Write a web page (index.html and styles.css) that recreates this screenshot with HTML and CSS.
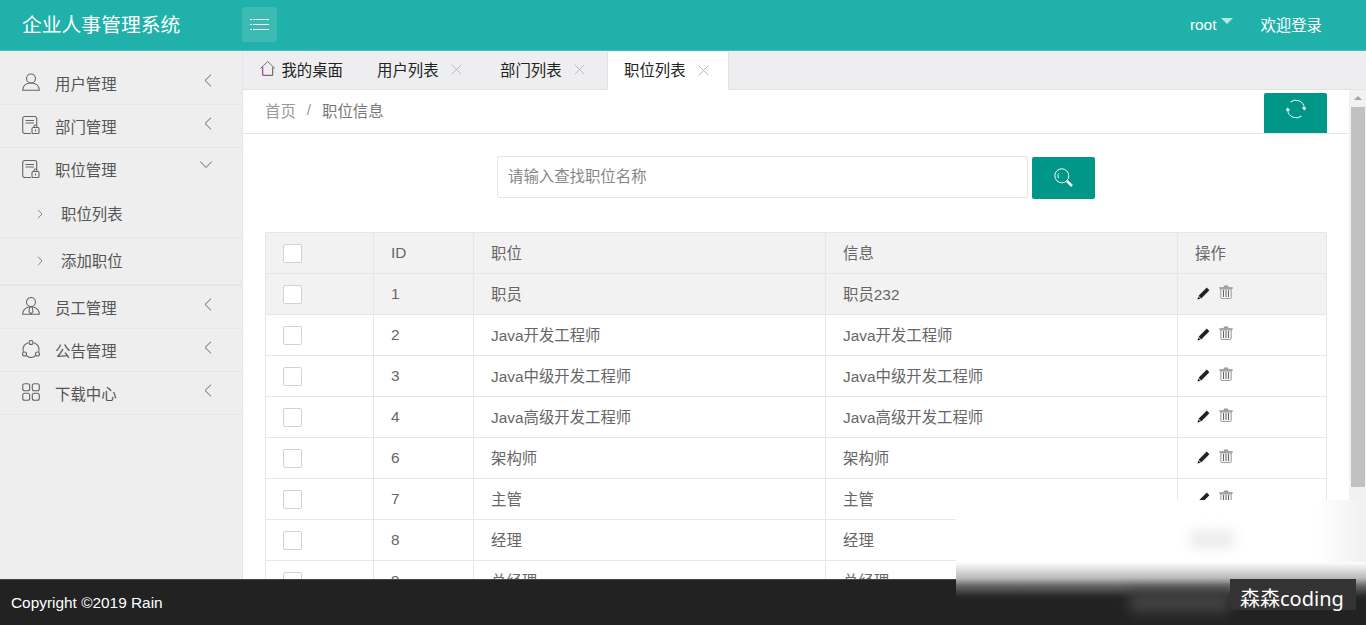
FILE: index.html
```html
<!DOCTYPE html>
<html lang="zh-CN">
<head>
    <meta charset="UTF-8">
    <title>企业人事管理系统</title>
    <link rel="stylesheet" href="styles.css">
</head>
<body>
    <svg class="sprites" width="0" height="0">
        <symbol id="i-user" viewBox="0 0 18 18"><circle cx="9" cy="5.500" r="4.500"/><path d="M.7 17.300c0-4.600 3.400-7.300 8.300-7.300s8.300 2.700 8.300 7.300z"/></symbol>
        <symbol id="i-doc" viewBox="0 0 18 18"><path d="M9 17.500H3C1.600 17.500 .7 16.600 .7 15.200V2.500C.7 1.200 1.600.5 3 .5h9.500c1.300 0 2.200.7 2.200 2V9"/><path d="M3.500 4.500h8.500M3.500 7h8.500"/><rect x="10" y="11.500" width="7" height="6" rx="1"/><path d="M12 11.500v-1c0-2 3-2 3 0v1M13.500 13.500v2"/></symbol>
        <symbol id="i-staff" viewBox="0 0 18 18"><circle cx="9" cy="5" r="4.500"/><path d="M.7 17.300c0-4 2.800-6.300 5.800-7.300h5c3 1 5.800 3.300 5.800 7.300z"/><path d="M7.800 10l-.8 4.500 2 2.500 2-2.500-.8-4.500"/></symbol>
        <symbol id="i-notice" viewBox="0 0 18 18"><circle cx="9" cy="2.500" r="2"/><circle cx="2.500" cy="14" r="2"/><circle cx="15.500" cy="14" r="2"/><path d="M6.200 2.800C3 4 1 6.700 1 9.500c0 .8.100 1.500.4 2.300M11.800 2.800C15 4 17 6.700 17 9.500c0 .8-.1 1.500-.4 2.300M4.500 15.800c2.700 2 6.300 2 9 0"/></symbol>
        <symbol id="i-grid" viewBox="0 0 18 18"><rect x=".7" y=".7" width="7" height="7" rx="2"/><rect x="10.300" y=".7" width="7" height="7" rx="2"/><rect x=".7" y="10.300" width="7" height="7" rx="2"/><rect x="10.300" y="10.300" width="7" height="7" rx="2"/></symbol>
        <symbol id="i-left" viewBox="0 0 8 13"><path d="M7 .7L1 6.500l6 5.800"/></symbol>
        <symbol id="i-right" viewBox="0 0 6 10"><path d="M1 .7L5 5 1 9.300"/></symbol>
        <symbol id="i-x" viewBox="0 0 11 11"><path d="M.7.7l9.600 9.600M10.300.7L.7 10.300"/></symbol>
        <symbol id="i-pen" viewBox="0 0 13 13"><path d="M9.800.6l2.600 2.600-8.200 8.200-2.600-2.600z" fill="#222"/><path d="M1.300 9.400l2.300 2.300-3.100.8z" fill="#222"/></symbol>
        <symbol id="i-trash" viewBox="0 0 14 14"><path d="M.3 2.300h13.400v1.400H.3z" fill="#8a8a8a"/><path d="M4.500 2.500L5 .6h4l.5 1.900z" fill="#999"/><path d="M1.800 4v8.600c0 .6.400 1 1 1h8.400c.6 0 1-.4 1-1V4z" fill="#f4f4f4" stroke="#999"/><path d="M4.500 5v7M7 5v7M9.500 5v7" stroke="#666"/></symbol>
    </svg>

    <header class="topbar">
        <div class="logo">企业人事管理系统</div>
        <a class="menu-btn">
            <svg width="19" height="11" viewBox="0 0 19 11"><path d="M0 .5h2M3 .5h16M0 5.500h2M3 5.500h16M0 10.500h2M3 10.500h16" stroke="#fff"/></svg>
        </a>
        <div class="topbar-right">
            <span class="user">root<i class="caret"></i></span>
            <span class="welcome">欢迎登录</span>
        </div>
    </header>

    <div class="middle">
        <aside class="sidebar">
            <div class="nav-item"><svg class="nav-icon"><use href="#i-user"/></svg><span>用户管理</span><svg class="nav-arrow"><use href="#i-left"/></svg></div>
            <div class="nav-item"><svg class="nav-icon"><use href="#i-doc"/></svg><span>部门管理</span><svg class="nav-arrow"><use href="#i-left"/></svg></div>
            <div class="nav-item nav-open"><svg class="nav-icon"><use href="#i-doc"/></svg><span>职位管理</span><svg class="nav-arrow arrow-down"><use href="#i-left"/></svg></div>
            <div class="sub-item"><svg class="sub-arrow"><use href="#i-right"/></svg><span>职位列表</span></div>
            <div class="sub-item sub-last"><svg class="sub-arrow"><use href="#i-right"/></svg><span>添加职位</span></div>
            <div class="nav-item"><svg class="nav-icon"><use href="#i-staff"/></svg><span>员工管理</span><svg class="nav-arrow"><use href="#i-left"/></svg></div>
            <div class="nav-item"><svg class="nav-icon"><use href="#i-notice"/></svg><span>公告管理</span><svg class="nav-arrow"><use href="#i-left"/></svg></div>
            <div class="nav-item"><svg class="nav-icon"><use href="#i-grid"/></svg><span>下载中心</span><svg class="nav-arrow"><use href="#i-left"/></svg></div>
        </aside>

        <main class="main">
            <div class="tabs">
                <div class="tab tab-home">
                    <svg width="17" height="17" viewBox="0 0 17 17"><path d="M.5 8.500L8.500.8l8 7.700" fill="none" stroke="#666"/><path d="M3 7v9" stroke="#800080" fill="none"/><path d="M3 16h11V7" stroke="#444" fill="none"/></svg>
                    <span>我的桌面</span>
                </div>
                <div class="tab"><span>用户列表</span><svg class="tab-close"><use href="#i-x"/></svg></div>
                <div class="tab"><span>部门列表</span><svg class="tab-close"><use href="#i-x"/></svg></div>
                <div class="tab tab-active"><span>职位列表</span><svg class="tab-close"><use href="#i-x"/></svg></div>
            </div>

            <div class="content-wrap">
                <div class="content">
                    <div class="crumb">
                        <span class="crumb-link">首页</span>
                        <span class="crumb-sep">/</span>
                        <span class="crumb-cur">职位信息</span>
                        <a class="btn btn-refresh">
                            <svg width="20" height="20" viewBox="0 0 20 20" fill="none" stroke="#fff"><path d="M4.500 3A8.500 8.500 0 0 1 18.300 9M15.500 17A8.500 8.500 0 0 1 1.700 11"/><path d="M15.800 8.500h5l-2.500 3zM4.200 11.500h-5l2.500-3z" fill="#fff" stroke="none"/></svg>
                        </a>
                    </div>

                    <form class="search">
                        <div class="search-input">请输入查找职位名称</div>
                        <a class="btn btn-search">
                            <svg width="19" height="19" viewBox="0 0 19 19" fill="none" stroke="#fff"><circle cx="7.800" cy="7.800" r="7"/><path d="M4.500 5.500c-.7 1.500-.7 3 0 4.500"/><path d="M13 13l5 5" stroke-width="2.500"/></svg>
                        </a>
                    </form>

                    <table class="grid">
                        <colgroup><col class="c-check"><col class="c-id"><col class="c-name"><col class="c-info"><col class="c-op"></colgroup>
                        <thead>
                            <tr><th><i class="check"></i></th><th>ID</th><th><span class="cjk">职位</span></th><th><span class="cjk">信息</span></th><th><span class="cjk">操作</span></th></tr>
                        </thead>
                        <tbody>
                            <tr class="row-hover"><td><i class="check"></i></td><td>1</td><td><span class="cjk">职员</span></td><td><span class="cjk">职员232</span></td><td class="ops"><svg class="pen"><use href="#i-pen"/></svg><svg class="trash"><use href="#i-trash"/></svg></td></tr>
                            <tr><td><i class="check"></i></td><td>2</td><td><span class="cjk">Java开发工程师</span></td><td><span class="cjk">Java开发工程师</span></td><td class="ops"><svg class="pen"><use href="#i-pen"/></svg><svg class="trash"><use href="#i-trash"/></svg></td></tr>
                            <tr><td><i class="check"></i></td><td>3</td><td><span class="cjk">Java中级开发工程师</span></td><td><span class="cjk">Java中级开发工程师</span></td><td class="ops"><svg class="pen"><use href="#i-pen"/></svg><svg class="trash"><use href="#i-trash"/></svg></td></tr>
                            <tr><td><i class="check"></i></td><td>4</td><td><span class="cjk">Java高级开发工程师</span></td><td><span class="cjk">Java高级开发工程师</span></td><td class="ops"><svg class="pen"><use href="#i-pen"/></svg><svg class="trash"><use href="#i-trash"/></svg></td></tr>
                            <tr><td><i class="check"></i></td><td>6</td><td><span class="cjk">架构师</span></td><td><span class="cjk">架构师</span></td><td class="ops"><svg class="pen"><use href="#i-pen"/></svg><svg class="trash"><use href="#i-trash"/></svg></td></tr>
                            <tr><td><i class="check"></i></td><td>7</td><td><span class="cjk">主管</span></td><td><span class="cjk">主管</span></td><td class="ops"><svg class="pen"><use href="#i-pen"/></svg><svg class="trash"><use href="#i-trash"/></svg></td></tr>
                            <tr><td><i class="check"></i></td><td>8</td><td><span class="cjk">经理</span></td><td><span class="cjk">经理</span></td><td class="ops"><svg class="pen"><use href="#i-pen"/></svg><svg class="trash"><use href="#i-trash"/></svg></td></tr>
                            <tr><td><i class="check"></i></td><td>9</td><td><span class="cjk">总经理</span></td><td><span class="cjk">总经理</span></td><td class="ops"><svg class="pen"><use href="#i-pen"/></svg><svg class="trash"><use href="#i-trash"/></svg></td></tr>
                        </tbody>
                    </table>
                </div>

                <div class="scrollbar">
                    <i class="scroll-up"></i>
                    <div class="scroll-thumb"></div>
                </div>
            </div>
        </main>
    </div>

    <footer class="footer">Copyright ©2019 Rain</footer>

    <!-- blurred watermark patch over the bottom right corner -->
    <div class="blur-patch"><i class="blur-smudge"></i></div>
    <i class="blur-dark"></i>
    <div class="watermark">森森coding</div>
</body>
</html>
```

FILE: styles.css
```css
* {
    box-sizing: border-box;
}

html, body {
    height: 100%;
}

body {
    margin: 0;
    display: flex;
    flex-direction: column;
    position: relative;
    overflow: hidden;
    font-family: "Liberation Sans", "Noto Sans CJK SC", sans-serif;
    font-size: 15.4px;
    color: #666;
    background-color: #fff;
}

.sprites {
    position: absolute;
}

/* top bar */
.topbar {
    flex: 0 0 51px;
    display: flex;
    align-items: center;
    padding-bottom: 1px;
    background-color: #20b2aa;
    border-bottom: 1px solid #3cc2ba;
    color: #fff;
}

.logo {
    width: 242px;
    padding-left: 22px;
    padding-bottom: 3px;
    font-size: 19.8px;
}

.menu-btn {
    width: 35px;
    height: 35px;
    display: flex;
    align-items: center;
    justify-content: center;
    background-color: rgba(255, 255, 255, 0.12);
    border-radius: 3px;
}

.topbar-right {
    margin-left: auto;
    display: flex;
    align-items: center;
    padding-right: 44px;
    padding-bottom: 2px;
}

.user {
    display: flex;
    align-items: center;
    margin-top: 2px;
    margin-right: 27px;
}

.caret {
    width: 0;
    height: 0;
    margin-left: 5px;
    margin-top: -7px;
    border-style: solid;
    border-width: 6px 6.5px 0;
    border-color: #b5e6e0 transparent transparent;
}

.middle {
    flex: 1;
    min-height: 0;
    display: flex;
}

/* side menu */
.sidebar {
    flex: 0 0 243px;
    padding-top: 11px;
    background-color: #eee;
    border-right: 1px solid #e6e6e6;
    color: #555;
}

.nav-item {
    height: 43px;
    display: flex;
    align-items: center;
    padding: 1px 0 0 22px;
    border-bottom: 1px solid #e6e6e6;
}

.nav-item span, .sub-item span {
    margin-bottom: 2px;
}

.nav-open {
    border-bottom: none;
}

.nav-icon {
    width: 18px;
    height: 18px;
    margin-right: 15px;
    margin-top: -3px;
    fill: none;
    stroke: #666;
    stroke-width: 1.1;
}

.nav-arrow {
    width: 8px;
    height: 13px;
    margin-left: 87px;
    margin-top: -7px;
    fill: none;
    stroke: #666;
}

.arrow-down {
    transform: translate(-2px, -2px) rotate(-90deg);
}

.sub-item {
    height: 47px;
    display: flex;
    align-items: center;
    padding-left: 37px;
    border-bottom: 1px solid #e6e6e6;
}

.sub-last {
    height: 48px;
    border-bottom: 2px solid #e6e6e6;
}

.sub-arrow {
    width: 6px;
    height: 10px;
    margin-right: 18px;
    fill: none;
    stroke: #888;
}

/* tabs */
.main {
    flex: 1;
    min-width: 0;
    display: flex;
    flex-direction: column;
}

.tabs {
    flex: 0 0 39px;
    min-height: 0;
    display: flex;
    background-color: #eeeef0;
    border-bottom: 1px solid #e2e2e2;
    color: #222;
}

.tab {
    flex: none;
    display: flex;
    align-items: center;
    width: 123px;
    height: 38px;
    padding: 0 17px;
    white-space: nowrap;
}

.tab span {
    margin-bottom: 3px;
}

.tab-home {
    width: 117px;
    gap: 6px;
}

.tab-home svg {
    margin-top: -3px;
}

.tab-close {
    width: 11px;
    height: 11px;
    margin-left: 12px;
    margin-bottom: 1px;
    fill: none;
    stroke: #bbb;
}

.tab-active {
    width: 122px;
    margin-left: 1px;
    margin-top: 1px;
    padding: 0 16px 1px;
    background-color: #fff;
    border-left: 1px solid #e2e2e2;
    border-right: 1px solid #e2e2e2;
}

/* page body */
.content-wrap {
    flex: 1;
    min-height: 0;
    display: flex;
}

.content {
    flex: 1;
    min-width: 0;
    overflow: hidden;
}

.crumb {
    height: 44px;
    display: flex;
    align-items: center;
    padding: 0 22px;
    border-bottom: 1px solid #e6e6e6;
}

.crumb span {
    margin-bottom: 4px;
}

.crumb-link {
    color: #999;
}

.crumb-sep {
    margin: 0 11px;
    color: #999;
}

.crumb-cur {
    color: #777;
}

.btn {
    display: flex;
    align-items: center;
    justify-content: center;
    width: 63px;
    background-color: #009688;
    border-radius: 2px;
}

.btn-refresh {
    margin-left: auto;
    align-self: flex-end;
    height: 40px;
    padding-bottom: 9px;
    border-radius: 2px 2px 0 0;
}

.search {
    display: flex;
    justify-content: center;
    gap: 4px;
    margin: 22px 0 33px;
}

.search-input {
    width: 531px;
    height: 42px;
    display: flex;
    align-items: center;
    padding: 0 0 4px 10px;
    background-color: #fff;
    border: 1px solid #e6e6e6;
    border-radius: 2px;
    color: #888;
}

.btn-search {
    height: 42px;
    margin-top: 1px;
    padding-bottom: 2px;
}

/* table */
.grid {
    width: 1062px;
    margin-left: 22px;
    border-collapse: collapse;
    table-layout: fixed;
}

.c-check { width: 108px; }
.c-id { width: 100px; }
.c-name { width: 352px; }
.c-info { width: 352px; }
.c-op { width: 149px; }

.grid th, .grid td {
    height: 41px;
    padding: 0 17px;
    border: 1px solid #e6e6e6;
    font-weight: normal;
    text-align: left;
    white-space: nowrap;
}

.grid th, .row-hover td {
    background-color: #f2f2f2;
}

.cjk {
    display: block;
    margin-bottom: 2px;
}

.check {
    display: block;
    width: 19px;
    height: 19px;
    background-color: #fff;
    border: 1px solid #d2d2d2;
    border-radius: 2px;
}

.ops {
    line-height: 0;
}

.pen {
    width: 13px;
    height: 13px;
    margin-left: 2px;
    margin-right: 9px;
    margin-bottom: 2px;
}

.trash {
    width: 14px;
    height: 14px;
    margin-top: -2px;
    vertical-align: top;
}

.scrollbar {
    flex: 0 0 17px;
    background-color: #f1f1f1;
}

.scroll-up {
    display: block;
    width: 0;
    height: 0;
    margin: 6px auto 0;
    border-style: solid;
    border-width: 0 4px 4px;
    border-color: transparent transparent #a3a3a3;
}

.scroll-thumb {
    height: 380px;
    margin: 7px 1px 0 2px;
    background-color: #c1c1c1;
}

.footer {
    flex: 0 0 46px;
    display: flex;
    align-items: center;
    padding-left: 11px;
    background-color: #222;
    border-top: 1px solid #444;
    color: #fff;
}

/* overlays */
.blur-patch {
    position: absolute;
    left: 956px;
    right: 0;
    top: 500px;
    height: 100px;
    background:
        linear-gradient(to right, rgba(240, 240, 240, 0) 88%, #f0f0f0 100%) no-repeat 0 0 / 100% 62%,
        linear-gradient(#fff 0, #fff 62%, #bbb 78%, #666 86%, #2a2a2a 96%, rgba(34, 34, 34, 0.9) 100%);
}

.blur-smudge {
    position: absolute;
    left: 234px;
    top: 30px;
    width: 44px;
    height: 18px;
    background-color: #ececec;
    filter: blur(6px);
}

.blur-dark {
    position: absolute;
    left: 1130px;
    top: 592px;
    width: 100px;
    height: 20px;
    background-color: #444;
    filter: blur(7px);
}

.watermark {
    position: absolute;
    left: 1230px;
    top: 579px;
    width: 126px;
    height: 31px;
    padding-left: 10px;
    background-color: #333;
    color: #fff;
    font-family: "Noto Sans", "Noto Sans CJK SC", sans-serif;
    font-size: 20px;
    line-height: 40px;
    white-space: nowrap;
}
```
